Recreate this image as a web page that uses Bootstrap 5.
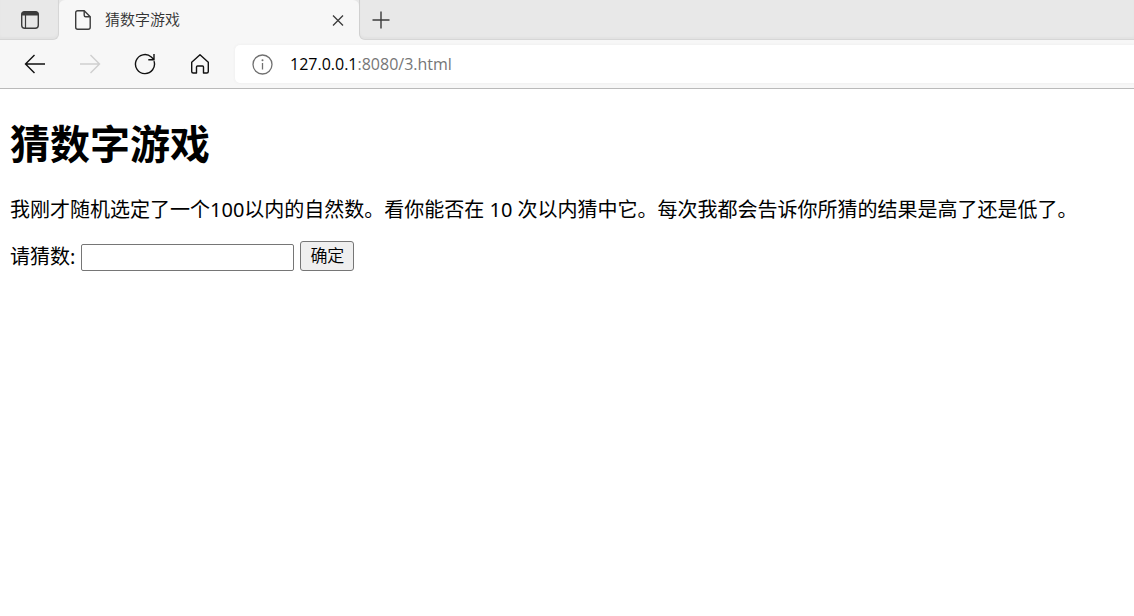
<!DOCTYPE html>
<html lang="zh-CN">
<head>
<meta charset="utf-8">
<meta name="viewport" content="width=device-width, initial-scale=1">
<title>猜数字游戏</title>
<link href="https://cdn.jsdelivr.net/npm/bootstrap@5.3.0/dist/css/bootstrap.min.css" rel="stylesheet">
<style>
  body { font-family: "Open Sans", "Noto Sans CJK SC", sans-serif; color: #000; background: #fff; }
  svg { display: block; fill: none; stroke: currentColor; }
  .chrome { background: #f7f7f7; border-bottom: 1px solid #bababa; }
  .icon-btn { border: 0; padding: 0; background: transparent; color: #111; display: flex; align-items: center; justify-content: center; }
  .strip { height: 40px; }
  .strip .icon-btn { color: #3b3b3b; }
  .strip-side { background: #e8e8e8; border-bottom: 1px solid #d6d6d6; box-shadow: inset 0 -2px 2px #e2e2e2; }
  .strip-left { width: 59px; padding-left: 2px; border-right: 1px solid #d6d6d6; border-bottom-right-radius: 6px; }
  .strip-right { border-left: 1px solid #d0d0d0; border-bottom-left-radius: 6px; padding-left: 8px; }
  .tab-wrap { background: linear-gradient(#e8e8e8 0 10px, #f7f7f7 10px); width: 300px; }
  .page-tab { background: #f7f7f7; border-radius: 6px 6px 0 0; padding: 0 10px 0 14px; color: #3b3b3b; }
  .tab-title { font-size: 15px; line-height: 20px; font-weight: 350; color: #333; padding-bottom: 2px; }
  .toolbar { height: 48px; padding-left: 10px; }
  .nav-group { gap: 5px; }
  .nav-btn { width: 50px; height: 38px; }
  .nav-btn:disabled { color: #cfcfcf; }
  .address { background: #fff; height: 38px; border-radius: 5px 0 0 5px; margin-left: 10px; padding-left: 17px; gap: 17px; box-shadow: 0 0 3px #eaeaea; font-size: 16px; line-height: 24px; color: #767676; }
  .address svg { color: #707070; }
  .page { padding: 28px 10px; font-family: "Noto Sans", "Noto Sans CJK SC", sans-serif; font-size: 20px; line-height: 27px; }
  .page h1 { font-size: 40px; line-height: 54px; font-weight: 700; margin: 0 0 25px; }
  .page p { margin: 0 0 18px; }
  .guess-row { gap: 6px; }
  .guess { width: 213px; height: 27px; border: 1px solid #767676; border-radius: 2px; padding: 1px 2px; font-size: 17px; background: #fff; margin-top: 3px; }
  .submit { height: 30px; border: 1px solid #767676; border-radius: 3px; background: #efefef; color: #000; padding: 0 9px; font-size: 17px; font-weight: 350; line-height: 24px; }
</style>
</head>
<body>
<header class="chrome">
  <div class="strip d-flex">
    <div class="strip-side strip-left d-flex justify-content-center">
      <button class="icon-btn" type="button" aria-label="标签操作菜单">
        <svg width="20" height="20" viewBox="0 0 20 20"><rect x="1.7" y="1.7" width="16.6" height="16.6" rx="3" stroke-width="1.4"/><path d="M1.5 5.5V4.5a3 3 0 0 1 3-3h11a3 3 0 0 1 3 3v1z" fill="currentColor" stroke="none"/><path d="M5.5 5v13" stroke-width="1.2"/></svg>
      </button>
    </div>
    <div class="tab-wrap">
      <div class="page-tab d-flex align-items-center h-100">
        <svg width="20" height="22" viewBox="0 0 20 22" stroke-width="1.4" stroke-linejoin="round"><path d="M4.7 1.7h6.5l6 6v10.6a2 2 0 0 1-2 2H4.7a2 2 0 0 1-2-2V3.7a2 2 0 0 1 2-2z"/><path d="M11.2 1.7v4.5a1.5 1.5 0 0 0 1.5 1.5h4.5"/></svg>
        <span class="tab-title flex-grow-1 ms-2 ps-1">猜数字游戏</span>
        <button class="icon-btn" type="button" aria-label="关闭标签"><svg width="22" height="20" viewBox="0 0 22 20" stroke-width="1.3"><path d="M6 5.5l10 10M16 5.5l-10 10"/></svg></button>
      </div>
    </div>
    <div class="strip-side strip-right d-flex flex-grow-1">
      <button class="icon-btn" type="button" aria-label="新建标签"><svg width="26" height="26" viewBox="0 0 26 26" stroke-width="1.4"><path d="M13 4.5v17M4.5 13h17"/></svg></button>
    </div>
  </div>
  <nav class="toolbar d-flex align-items-center" aria-label="导航">
    <div class="nav-group d-flex">
      <button class="icon-btn nav-btn" type="button" aria-label="后退"><svg width="22" height="22" viewBox="0 0 22 22" stroke-width="1.4"><path d="M21 11H1.5M10.5 2l-9 9 9 9"/></svg></button>
      <button class="icon-btn nav-btn" type="button" aria-label="前进" disabled><svg width="22" height="22" viewBox="0 0 22 22" stroke-width="1.4"><path d="M1 11h19.5M11.5 2l9 9-9 9"/></svg></button>
      <button class="icon-btn nav-btn" type="button" aria-label="刷新"><svg width="22" height="22" viewBox="0 0 22 22" stroke-width="1.4"><path d="M20 8.100a9.500 9.500 0 1 1-2.700-4.100l2.500 2.500M20 1v5.700h-5.700"/></svg></button>
      <button class="icon-btn nav-btn" type="button" aria-label="主页"><svg width="22" height="22" viewBox="0 0 22 22" stroke-width="1.4" stroke-linejoin="round"><path d="M2.700 9.300 11 1.800l8.300 7.500v9.200a1.500 1.500 0 0 1-1.500 1.500h-3.300v-6a1 1 0 0 0-1-1h-5a1 1 0 0 0-1 1v6H4.200a1.500 1.500 0 0 1-1.500-1.500z"/></svg></button>
    </div>
    <div class="address d-flex align-items-center flex-grow-1">
      <svg width="21" height="21" viewBox="0 0 21 21" stroke-width="1.3"><circle cx="10.500" cy="10.500" r="9.500"/><path d="M10.500 9v6.500"/><circle cx="10.500" cy="6.300" r="1" fill="currentColor" stroke="none"/></svg>
      <div><span class="text-black">127.0.0.1</span>:8080/3.html</div>
    </div>
  </nav>
</header>
<main class="page">
  <h1>猜数字游戏</h1>
  <p>我刚才随机选定了一个100以内的自然数。看你能否在 10 次以内猜中它。每次我都会告诉你所猜的结果是高了还是低了。</p>
  <form class="guess-row d-flex align-items-center">
    <label for="guessField">请猜数:</label>
    <input class="guess" type="text" id="guessField">
    <button class="submit" type="button">确定</button>
  </form>
</main>
<script src="https://cdn.jsdelivr.net/npm/bootstrap@5.3.0/dist/js/bootstrap.bundle.min.js"></script>
</body>
</html>
